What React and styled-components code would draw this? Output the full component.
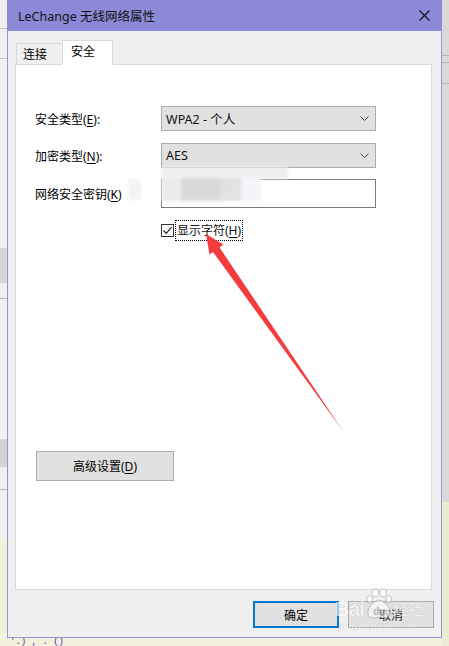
import React from "react";
import styled, { createGlobalStyle } from "styled-components";

const GlobalStyle = createGlobalStyle`
  html, body { margin: 0; padding: 0; background: #f3f1dc; }
  body { font-family: "Noto Sans", "Noto Sans CJK SC", sans-serif; font-size: 12px; color: #000; }
`;

const Desktop = styled.div`
  width: 449px;
  height: 646px;
  display: flex;
  overflow: hidden;
  background: #f3f1dc;
`;

const LeftStrip = styled.div`
  width: 7px;
  height: 646px;
  flex: none;
  background:
    linear-gradient(#c4c4c4, #c4c4c4) 0 28px / 100% 1px no-repeat,
    linear-gradient(#c4c4c4, #c4c4c4) 0 58px / 100% 1px no-repeat,
    linear-gradient(#d6d6d6, #d6d6d6) 0 248px / 100% 35px no-repeat,
    linear-gradient(#b8b8b8, #b8b8b8) 0 298px / 100% 1px no-repeat,
    linear-gradient(#d4d4d4, #d4d4d4) 0 439px / 100% 28px no-repeat,
    linear-gradient(#b8b8b8, #b8b8b8) 0 489px / 100% 1px no-repeat,
    linear-gradient(#f0f0f0, #f0f0f0) 0 0 / 100% 538px no-repeat,
    #f3f1dc;
`;

const RightStrip = styled.div`
  width: 7px;
  height: 646px;
  flex: none;
  background:
    linear-gradient(#b4b4b4, #b4b4b4) 0 55px / 100% 1px no-repeat,
    linear-gradient(#b4b4b4, #b4b4b4) 0 62px / 100% 1px no-repeat,
    linear-gradient(#b4b4b4, #b4b4b4) 0 83px / 100% 1px no-repeat,
    linear-gradient(#d9d9d9, #d9d9d9) 0 0 / 100% 502px no-repeat,
    #ecead3;
`;

const Middle = styled.div`
  width: 435px;
  flex: none;
  display: flex;
  flex-direction: column;
`;

const Window = styled.div`
  position: relative;
  width: 435px;
  height: 638px;
  box-sizing: border-box;
  border: 1px solid #9593dc;
  border-top: none;
  background: #f0f0f0;
  display: flex;
  flex-direction: column;
`;

const TitleBar = styled.div`
  height: 31px;
  margin: 0 -1px;
  background: #8c89d8;
  display: flex;
  align-items: center;
  justify-content: space-between;
  padding: 0 12px 0 11px;
  font-size: 12.5px;
  color: #111;
`;

const Body = styled.div`
  flex: 1;
  display: flex;
  flex-direction: column;
  padding: 9px 9px 0 7px;
`;

const TabRow = styled.div`
  display: flex;
  align-items: flex-end;
  padding-left: 1px;
  margin-bottom: -1px;
  position: relative;
  z-index: 1;
`;

const Tab = styled.div`
  box-sizing: border-box;
  height: ${(p) => (p.$active ? 25 : 22)}px;
  padding: ${(p) => (p.$active ? "3px 0 0 8px" : "3px 0 0 6px")};
  width: ${(p) => (p.$active ? 51 : 47)}px;
  border: 1px solid #d9d9d9;
  border-bottom-color: ${(p) => (p.$active ? "#fff" : "#d9d9d9")};
  margin-left: ${(p) => (p.$active ? -1 : 0)}px;
  background: ${(p) => (p.$active ? "#fff" : "#f0f0f0")};
  font-size: 12px;
  line-height: 16px;
`;

const Panel = styled.div`
  box-sizing: border-box;
  height: 526px;
  background: #fff;
  border: 1px solid #d9d9d9;
  padding: 41px 0 0 19px;
  display: flex;
  flex-direction: column;
`;

const FormGrid = styled.div`
  display: grid;
  grid-template-columns: 126px 215px;
  row-gap: 12px;
  align-items: center;
`;

const Label = styled.div`
  font-size: 12px;
  white-space: nowrap;
`;

const Key = styled.u`
  text-decoration-thickness: 1px;
  text-underline-offset: 2px;
`;

const Combo = styled.div`
  box-sizing: border-box;
  height: 25px;
  background: #e1e1e1;
  border: 1px solid #adadad;
  display: flex;
  align-items: center;
  justify-content: space-between;
  padding: 0 6px 0 4px;
  font-size: 12.5px;
  color: #111;
`;

const TextBox = styled.div`
  box-sizing: border-box;
  height: 29px;
  margin-top: -1px;
  background: #fff;
  border: 1px solid #7a7a7a;
`;

const CheckRow = styled.div`
  grid-column: 2;
  display: flex;
  align-items: center;
  gap: 2px;
  margin-top: 1px;
`;

const CheckBox = styled.div`
  box-sizing: border-box;
  width: 13px;
  height: 13px;
  border: 1px solid #333;
  background: #fff;
  display: flex;
  align-items: center;
  justify-content: center;
`;

const FocusLabel = styled.div`
  outline: 1px dotted #000;
  padding: 1px;
  font-size: 12px;
  color: #111;
  line-height: 17px;
`;

const Button = styled.div`
  box-sizing: border-box;
  width: ${(p) => p.$w}px;
  height: ${(p) => p.$h}px;
  background: #e1e1e1;
  border: ${(p) => (p.$default ? "2px solid #0078d7" : "1px solid #adadad")};
  display: flex;
  align-items: center;
  justify-content: center;
  font-size: 12px;
  color: ${(p) => (p.$disabled ? "#222" : "#000")};
`;

const AdvancedWrap = styled.div`
  margin-top: auto;
  margin-bottom: 108px;
  margin-left: 1px;
`;

const ButtonRow = styled.div`
  display: flex;
  justify-content: flex-end;
  gap: 9px;
  padding-top: 11px;
  margin-right: -2px;
`;

const Overlay = styled.svg`
  position: absolute;
  left: -7px;
  top: 0;
  width: 449px;
  height: 646px;
  pointer-events: none;
`;

const Watermark = styled.div`
  position: absolute;
  left: 327px;
  top: 588px;
  display: flex;
  flex-direction: column;
  align-items: flex-start;
  pointer-events: none;
  opacity: 0.6;
  color: #fff;
  text-shadow: 0 0 1px rgba(120, 120, 120, 0.8);
`;

const WmMain = styled.div`
  display: flex;
  align-items: flex-end;
  font-family: "Liberation Sans", "Noto Sans CJK SC", sans-serif;
  font-weight: bold;
  font-size: 20px;
  line-height: 20px;
  letter-spacing: -0.5px;
`;

const WmCjk = styled.span`
  font-size: 15px;
  line-height: 18px;
  font-weight: normal;
  margin-left: 1px;
`;

const WmSub = styled.div`
  font-family: "Liberation Sans", sans-serif;
  font-size: 9px;
  line-height: 10px;
  padding: 2px 0 0 4px;
  letter-spacing: 0.2px;
`;

const BottomText = styled.div`
  height: 8px;
  font-family: "Liberation Mono", monospace;
  font-size: 9px;
  line-height: 8px;
  color: #3b3bb0;
  padding-left: 3px;
  overflow: hidden;
`;

function Chevron() {
  return (
    <svg width="9" height="5" viewBox="0 0 9 5">
      <path d="M0.5 0.5 L4.5 4.5 L8.5 0.5" fill="none" stroke="#444" strokeWidth="1" />
    </svg>
  );
}

function Paw() {
  return (
    <svg width="28" height="32" viewBox="0 0 30 34" style={{ marginBottom: "-1px" }}>
      <g fill="#fff" stroke="#888" strokeWidth="0.8">
        <ellipse cx="5" cy="12" rx="3.2" ry="4" />
        <ellipse cx="11" cy="5" rx="3.5" ry="4.3" />
        <ellipse cx="19.5" cy="5" rx="3.5" ry="4.3" />
        <ellipse cx="25.5" cy="12" rx="3.2" ry="4" />
        <path d="M15 13 C9 13 3 21 3 27 C3 32 9 33 15 31 C21 33 27 32 27 27 C27 21 21 13 15 13 Z" />
      </g>
      <text
        x="15"
        y="29"
        textAnchor="middle"
        fontFamily="Liberation Sans, sans-serif"
        fontWeight="bold"
        fontSize="11"
        fill="#aaa"
      >
        du
      </text>
    </svg>
  );
}

export default function App() {
  return (
    <>
      <GlobalStyle />
      <Desktop>
        <LeftStrip />
        <Middle>
          <Window>
            <TitleBar>
              <span>LeChange 无线网络属性</span>
              <svg width="11" height="11" viewBox="0 0 11 11">
                <path d="M0.5 0.5 L10.5 10.5 M10.5 0.5 L0.5 10.5" stroke="#111" strokeWidth="1.1" />
              </svg>
            </TitleBar>
            <Body>
              <TabRow>
                <Tab>连接</Tab>
                <Tab $active>安全</Tab>
              </TabRow>
              <Panel>
                <FormGrid>
                  <Label>
                    安全类型(<Key>E</Key>):
                  </Label>
                  <Combo>
                    <span>WPA2 - 个人</span>
                    <Chevron />
                  </Combo>
                  <Label>
                    加密类型(<Key>N</Key>):
                  </Label>
                  <Combo>
                    <span>AES</span>
                    <Chevron />
                  </Combo>
                  <Label>
                    网络安全密钥(<Key>K</Key>)
                  </Label>
                  <TextBox />
                  <CheckRow>
                    <CheckBox>
                      <svg width="11" height="11" viewBox="0 0 11 11">
                        <path d="M1.5 5.5 L4.2 8.3 L9.6 2.2" fill="none" stroke="#222" strokeWidth="1.2" />
                      </svg>
                    </CheckBox>
                    <FocusLabel>
                      显示字符(<Key>H</Key>)
                    </FocusLabel>
                  </CheckRow>
                </FormGrid>
                <AdvancedWrap>
                  <Button $w={138} $h={30}>
                    高级设置(<Key>D</Key>)
                  </Button>
                </AdvancedWrap>
              </Panel>
              <ButtonRow>
                <Button $w={86} $h={27} $default>
                  确定
                </Button>
                <Button $w={86} $h={27} $disabled>
                  取消
                </Button>
              </ButtonRow>
            </Body>
            <Overlay viewBox="0 0 449 646">
              <defs>
                <filter id="soft" x="-20%" y="-20%" width="140%" height="140%">
                  <feGaussianBlur stdDeviation="1.5" />
                </filter>
              </defs>
              <g filter="url(#soft)">
                <rect x="160" y="167" width="127" height="12" fill="#efefef" />
                <rect x="127" y="179" width="13" height="21" fill="#f3f3f3" />
                <rect x="160" y="178" width="20" height="23" fill="#ebebeb" />
                <rect x="180" y="178" width="40" height="23" fill="#dadada" />
                <rect x="220" y="178" width="20" height="23" fill="#e2e2e2" />
                <rect x="240" y="178" width="20" height="23" fill="#f3f5f9" />
              </g>
              <polygon
                points="205,234 222.5,244.5 218.5,247.5 342,431 212,252 208.5,254.5"
                fill="#f53b3b"
              />
            </Overlay>
            <Watermark>
              <WmMain>
                <span>Bai</span>
                <Paw />
                <WmCjk>经验</WmCjk>
              </WmMain>
              <WmSub>jingyan.baidu.com</WmSub>
            </Watermark>
          </Window>
          <BottomText>{"  '.)   ,    .  ()"}</BottomText>
        </Middle>
        <RightStrip />
      </Desktop>
    </>
  );
}
